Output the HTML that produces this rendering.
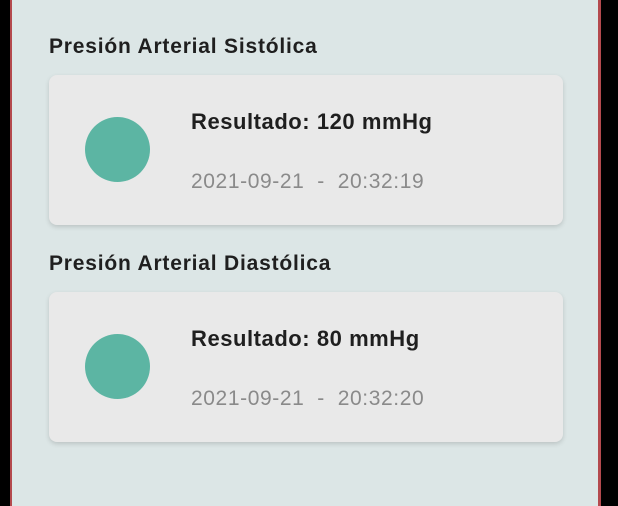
<!DOCTYPE html><html><head><style>
body{margin:0;width:618px;height:506px;background:#000;position:relative;overflow:hidden;font-family:"Liberation Sans",sans-serif}
.scr{position:absolute;left:10px;top:0;width:591px;height:506px;background:#dce6e6;border-left:2px solid #b44a4e;border-right:3px solid #b44a4e;box-sizing:border-box}
.t{position:absolute;left:49px;font-size:21px;letter-spacing:0.8px;font-weight:bold;color:#1f1f1f}
.c{position:absolute;left:49px;width:514px;height:150px;background:#e9e9e9;border-radius:8px;box-shadow:0 2px 5px rgba(0,0,0,.15)}
.d{position:absolute;left:36px;top:42px;width:65px;height:65px;border-radius:50%;background:#5cb5a3}
.r{position:absolute;left:142px;top:34px;font-size:22px;letter-spacing:0.55px;font-weight:bold;color:#1f1f1f}
.dt{position:absolute;left:142px;top:95px;font-size:21px;letter-spacing:0.6px;color:#8a8a8a;white-space:pre}
</style></head><body><div class="scr"></div>
<div class="t" style="top:35px">Presión Arterial Sistólica</div>
<div class="c" style="top:75px"><div class="d"></div><div class="r">Resultado: 120 mmHg</div><div class="dt">2021-09-21  -  20:32:19</div></div>
<div class="t" style="top:252px">Presión Arterial Diastólica</div>
<div class="c" style="top:292px"><div class="d"></div><div class="r">Resultado: 80 mmHg</div><div class="dt">2021-09-21  -  20:32:20</div></div>
</body></html>
